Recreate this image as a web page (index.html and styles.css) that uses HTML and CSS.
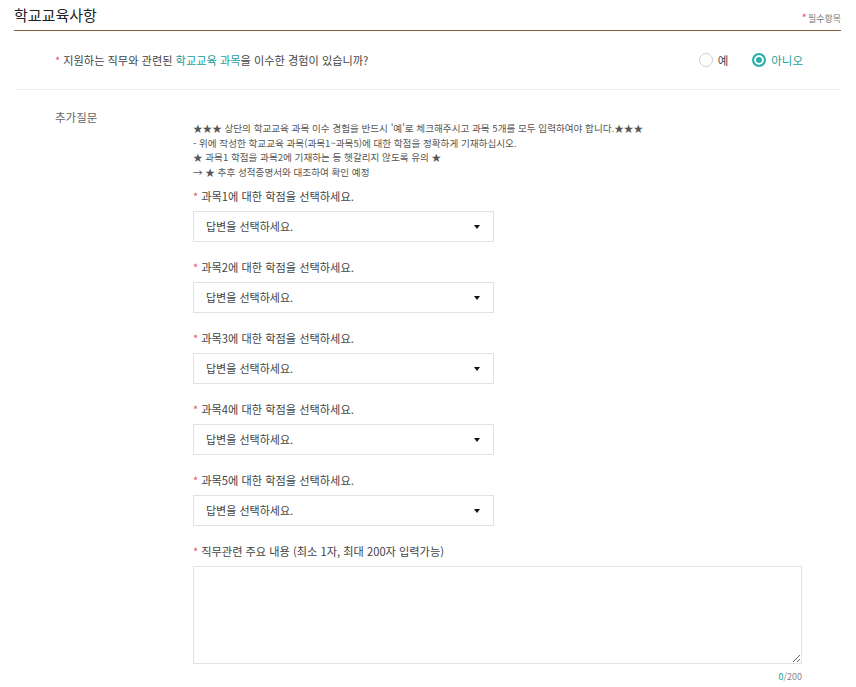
FILE: index.html
```html
<!DOCTYPE html>
<html lang="ko">
<head>
<meta charset="utf-8">
<link rel="stylesheet" href="styles.css">
</head>
<body>
<div class="section">
  <div class="head">
    <h2 class="title">학교교육사항</h2>
    <span class="req"><span class="star">*</span>필수항목</span>
  </div>
  <div class="q-row">
    <p class="q"><span class="star">*</span> 지원하는 직무와 관련된 <span class="hl">학교교육 과목</span>을 이수한 경험이 있습니까?</p>
    <div class="radios">
      <label class="radio"><span class="circle"></span>예</label>
      <label class="radio on"><span class="circle"></span>아니오</label>
    </div>
  </div>
  <div class="extra">
    <div class="extra-label">추가질문</div>
    <div class="extra-body">
      <div class="notice">
        <p>★★★ 상단의 학교교육 과목 이수 경험을 반드시 '예'로 체크해주시고 과목 5개를 모두 입력하여야 합니다.★★★</p>
        <p>- 위에 작성한 학교교육 과목(과목1~과목5)에 대한 학점을 정확하게 기재하십시오.</p>
        <p>★ 과목1 학점을 과목2에 기재하는 등 헷갈리지 않도록 유의 ★</p>
        <p>→ ★ 추후 성적증명서와 대조하여 확인 예정</p>
      </div>
      <div class="field">
        <p class="flabel"><span class="star">*</span> 과목1에 대한 학점을 선택하세요.</p>
        <div class="select">답변을 선택하세요.<span class="arrow"></span></div>
      </div>
      <div class="field">
        <p class="flabel"><span class="star">*</span> 과목2에 대한 학점을 선택하세요.</p>
        <div class="select">답변을 선택하세요.<span class="arrow"></span></div>
      </div>
      <div class="field">
        <p class="flabel"><span class="star">*</span> 과목3에 대한 학점을 선택하세요.</p>
        <div class="select">답변을 선택하세요.<span class="arrow"></span></div>
      </div>
      <div class="field">
        <p class="flabel"><span class="star">*</span> 과목4에 대한 학점을 선택하세요.</p>
        <div class="select">답변을 선택하세요.<span class="arrow"></span></div>
      </div>
      <div class="field">
        <p class="flabel"><span class="star">*</span> 과목5에 대한 학점을 선택하세요.</p>
        <div class="select">답변을 선택하세요.<span class="arrow"></span></div>
      </div>
      <div class="field">
        <p class="flabel"><span class="star">*</span> 직무관련 주요 내용 (최소 1자, 최대 200자 입력가능)</p>
        <textarea class="ta"></textarea>
        <div class="count"><span class="cur">0</span>/200</div>
      </div>
    </div>
  </div>
</div>
</body>
</html>
```
FILE: styles.css
```css
* { box-sizing: border-box; }
body {
  margin: 0;
  background: #fff;
  font-family: "Noto Sans CJK KR", "Noto Sans", sans-serif;
  color: #333;
}
p { margin: 0; }
.section { padding: 0 15px 0 14px; }
.head {
  display: flex;
  justify-content: space-between;
  align-items: flex-end;
  height: 31px;
  border-bottom: 1px solid #8b5a3a;
  padding-bottom: 5px;
}
.title {
  margin: 0;
  font-size: 15px;
  font-weight: 400;
  color: #222;
  line-height: 20px;
}
.req {
  font-size: 9px;
  color: #777;
  line-height: 12px;
  align-self: flex-start;
  margin-top: 11px;
}
.star { color: #e8556a; }
.req .star { font-size: 11px; margin-right: 1px; }
.q-row {
  display: flex;
  align-items: center;
  justify-content: space-between;
  height: 59px;
  padding: 0 38px 0 39px;
  margin: 0 0 0 2px;
  border-bottom: 1px solid #ececec;
}
.q { font-size: 11.2px; color: #444; }
.hl { color: #1a9c9c; }
.radios { display: flex; gap: 24px; }
.radio {
  display: flex;
  align-items: center;
  gap: 5px;
  font-size: 11.5px;
  color: #444;
}
.circle {
  width: 14px;
  height: 14px;
  border-radius: 50%;
  border: 1px solid #cfcfcf;
  background: #fff;
}
.radio.on { color: #1a9c9c; }
.radio.on .circle {
  border: 2px solid #2bb0ad;
  box-shadow: inset 0 0 0 2px #fff;
  background: #2bb0ad;
}
.extra {
  display: grid;
  grid-template-columns: 179px 1fr;
  padding-top: 19px;
  padding-right: 39px;
}
.extra-label {
  padding-left: 41px;
  font-size: 11.5px;
  color: #666;
}
.extra-body { padding-top: 12px; }
.notice p {
  font-size: 9.6px;
  line-height: 14.7px;
  color: #555;
  white-space: nowrap;
}
.field { margin-top: 8px; }
.notice + .field { margin-top: 8px; }
.flabel { font-size: 11.2px; color: #444; line-height: 16px; }
.flabel .star, .q .star { font-size: 11px; }
.select {
  position: relative;
  width: 301px;
  height: 31px;
  margin-top: 7px;
  border: 1px solid #e2e2e2;
  padding: 0 12px;
  font-size: 11px;
  line-height: 29px;
  color: #444;
  margin-bottom: 17px;
}
.arrow {
  position: absolute;
  right: 13px;
  top: 13px;
  width: 0;
  height: 0;
  border-left: 3.5px solid transparent;
  border-right: 3.5px solid transparent;
  border-top: 4px solid #111;
}
.ta {
  display: block;
  width: 100%;
  height: 98px;
  margin-top: 7px;
  border: 1px solid #e2e2e2;
  resize: vertical;
  font-family: inherit;
}
.count {
  text-align: right;
  font-size: 9px;
  color: #888;
  margin-top: 6px;
}
.count .cur { color: #1a9c9c; }
```
